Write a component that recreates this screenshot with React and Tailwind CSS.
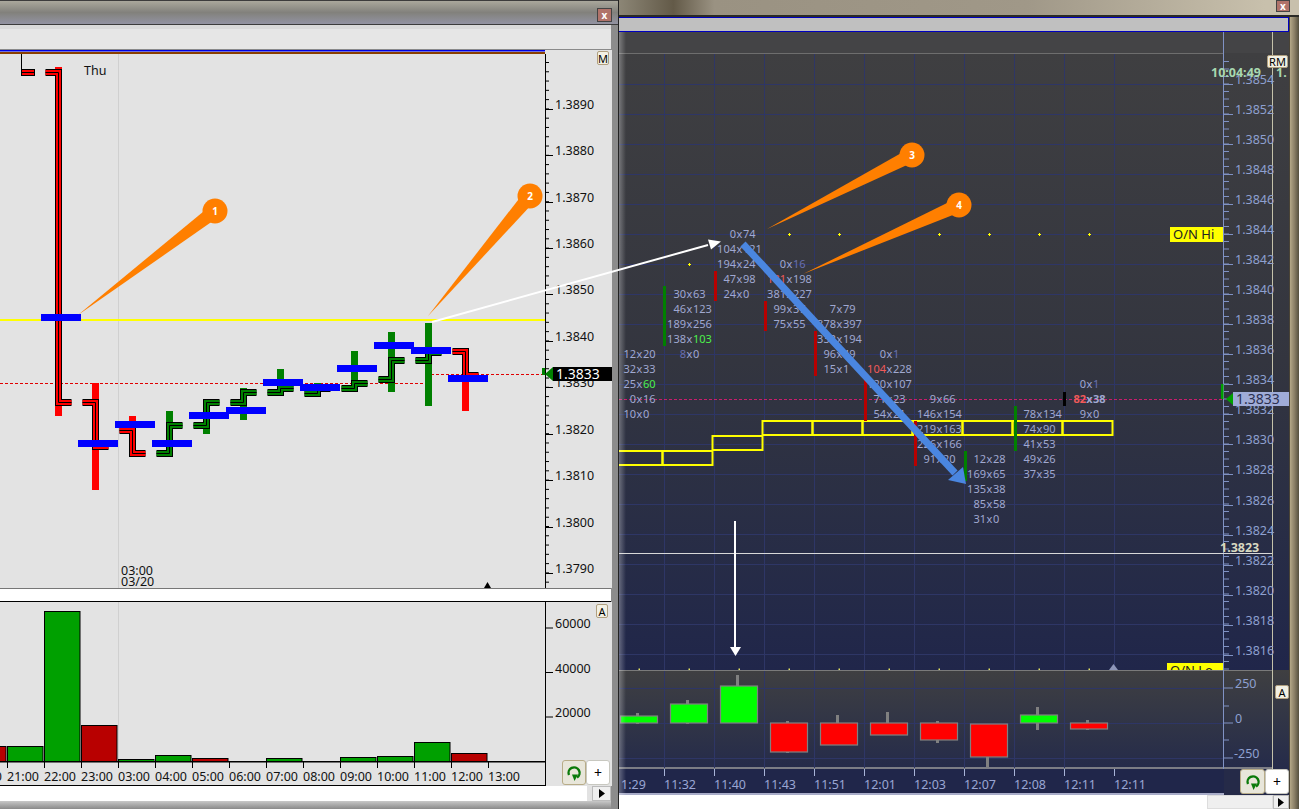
import React from "react";

const priceBars = [
  { x: 58.5, high: 67, low: 416, open: 72, close: 402, color: "#ff0000" },
  { x: 95, high: 383, low: 490, open: 402, close: 446, color: "#ff0000" },
  { x: 132, high: 416, low: 456, open: 430, close: 453, color: "#ff0000" },
  { x: 169.5, high: 411, low: 457, open: 453, close: 425, color: "#008000" },
  { x: 206, high: 402, low: 434, open: 425, close: 402, color: "#008000" },
  { x: 243.5, high: 388, low: 420, open: 402, close: 392, color: "#008000" },
  { x: 280, high: 369, low: 395, open: 392, close: 388, color: "#008000" },
  { x: 317, high: 383, low: 396, open: 393, close: 388, color: "#008000" },
  { x: 354, high: 351, low: 391, open: 388, close: 383, color: "#008000" },
  { x: 391, high: 332, low: 392, open: 379, close: 360, color: "#008000" },
  { x: 428, high: 323, low: 406, open: 360, close: 352, color: "#008000" },
  { x: 465, high: 351, low: 411, open: 351, close: 375, color: "#ff0000" },
];

const blueMarks = [
  [41, 314], [78, 440], [115, 421], [152, 440], [189, 412], [226, 407],
  [263, 379], [300, 384], [337, 365], [374, 342], [411, 347], [448, 375],
];

const leftPrices = [
  ["1.3890", 105], ["1.3880", 151], ["1.3870", 198], ["1.3860", 244], ["1.3850", 290],
  ["1.3840", 337], ["1.3830", 383], ["1.3820", 430], ["1.3810", 476], ["1.3800", 523], ["1.3790", 569],
];

const volumes = [
  { x: -30, top: 746, color: "#b80000" },
  { x: 7, top: 746, color: "#00a000" },
  { x: 44, top: 611, color: "#00a000" },
  { x: 81, top: 725, color: "#b80000" },
  { x: 118, top: 759, color: "#00a000" },
  { x: 155, top: 755, color: "#00a000" },
  { x: 192, top: 758, color: "#b80000" },
  { x: 266, top: 758, color: "#00a000" },
  { x: 340, top: 757, color: "#00a000" },
  { x: 377, top: 756, color: "#00a000" },
  { x: 414, top: 742, color: "#00a000" },
  { x: 451, top: 753, color: "#b80000" },
];

const hours = ["20:00", "21:00", "22:00", "23:00", "03:00", "04:00", "05:00", "06:00", "07:00", "08:00", "09:00", "10:00", "11:00", "12:00", "13:00"];

const rightPrices = [
  ["1.3854", 79], ["1.3852", 109], ["1.3850", 139], ["1.3848", 169], ["1.3846", 199], ["1.3844", 229],
  ["1.3842", 259], ["1.3840", 289], ["1.3838", 319], ["1.3836", 349], ["1.3834", 379], ["1.3832", 409],
  ["1.3830", 439], ["1.3828", 469], ["1.3826", 500], ["1.3824", 530], ["1.3822", 560], ["1.3820", 590],
  ["1.3818", 620], ["1.3816", 650],
];

const gridX = [664, 714, 764, 814, 864, 914, 964, 1014, 1064, 1114];

const RED = "#f05a5a";
const GREEN = "#4cf04c";
const DIM = "#6a70b0";
const TEXT = "#a0a8d0";

// bid x ask cells, column x, row y, [bid, ask, bidColor, askColor]
const footprint = [
  { x: 639, y: 354, rows: [["12", "20"], ["32", "33"], ["25", "60", null, GREEN], ["0", "16"], ["10", "0"]] },
  { x: 689, y: 294, rows: [["30", "63"], ["46", "123"], ["189", "256"], ["138", "103", null, GREEN], ["8", "0", DIM]] },
  { x: 739, y: 234, rows: [["0", "74"], ["104", "121"], ["194", "24"], ["47", "98"], ["24", "0"]] },
  { x: 789, y: 264, rows: [["0", "16", null, DIM], ["131", "198", RED], ["381", "227"], ["99", "37"], ["75", "55"]] },
  { x: 839, y: 309, rows: [["7", "79"], ["378", "397"], ["332", "194"], ["96", "49"], ["15", "1"]] },
  { x: 889, y: 354, rows: [["0", "1", null, DIM], ["104", "228", RED], ["120", "107"], ["71", "23"], ["54", "21"]] },
  { x: 939, y: 399, rows: [["9", "66"], ["146", "154"], ["219", "163"], ["226", "166"], ["91", "20"]] },
  { x: 989, y: 459, rows: [["12", "28"], ["169", "65"], ["135", "38"], ["85", "58"], ["31", "0"]] },
  { x: 1039, y: 414, rows: [["78", "134"], ["74", "90"], ["41", "53"], ["49", "26"], ["37", "35"]] },
  { x: 1089, y: 384, rows: [["0", "1", null, DIM], ["82", "38", RED], ["9", "0"]] },
];

const sideBars = [
  [663, 286, 346, "#008000"], [714, 271, 301, "#b80000"], [764, 301, 331, "#b80000"],
  [814, 331, 376, "#b80000"], [864, 376, 421, "#b80000"], [914, 421, 466, "#b80000"],
  [964, 451, 481, "#008000"], [1014, 406, 451, "#008000"], [1063, 392, 406, "#000000"],
];

const yellowBoxes = [
  [612, 451, 50], [662, 451, 50], [712, 436, 50], [762, 421, 50], [812, 421, 50], [862, 421, 50],
  [912, 421, 50], [962, 421, 50], [1012, 421, 50], [1062, 421, 50],
];

const candles = [
  { x: 620, top: 716, bottom: 723, high: 713, low: 724, up: true },
  { x: 670, top: 704, bottom: 723, high: 700, low: 724, up: true },
  { x: 720, top: 686, bottom: 723, high: 675, low: 723, up: true },
  { x: 770, top: 723, bottom: 752, high: 721, low: 753 },
  { x: 820, top: 723, bottom: 745, high: 715, low: 745 },
  { x: 870, top: 723, bottom: 735, high: 712, low: 735 },
  { x: 920, top: 723, bottom: 740, high: 721, low: 743 },
  { x: 970, top: 724, bottom: 757, high: 724, low: 767 },
  { x: 1020, top: 715, bottom: 723, high: 707, low: 730, up: true },
  { x: 1070, top: 723, bottom: 729, high: 720, low: 730 },
];

const times = ["11:32", "11:40", "11:43", "11:51", "12:01", "12:03", "12:07", "12:08", "12:11", "12:11"];

const callouts = [
  { n: 1, cx: 215, cy: 211, tx: 78, ty: 315 },
  { n: 2, cx: 530, cy: 196, tx: 428, ty: 316 },
  { n: 3, cx: 912, cy: 155, tx: 767, ty: 229 },
  { n: 4, cx: 959, cy: 205, tx: 803, ty: 274 },
];

const range = (n) => Array.from({ length: n }, (_, i) => i);

const PriceBar = ({ x, high, low, open, close, color }) => {
  const cx = Math.floor(x) + 0.5;
  const points = `${cx - 13},${open + 0.5} ${cx},${open + 0.5} ${cx},${close + 0.5} ${cx + 13},${close + 0.5}`;
  return (
    <g>
      <rect x={cx - 3.5} y={high} width="7" height={low - high} fill={color} />
      <polyline points={points} fill="none" stroke="#000" strokeWidth="7" />
      <polyline points={points} fill="none" stroke={color} strokeWidth="5" />
      <polyline points={points} fill="none" stroke="#000" strokeWidth="1" />
    </g>
  );
};

const Dot = ({ x, y }) => (
  <path d={`M${x - 1.5} ${y} h3 M${x} ${y - 1.5} v3`} stroke="#ffff00" strokeWidth="1" fill="none" />
);

const SmallButton = ({ label, className }) => (
  <div className={`absolute flex items-center justify-center rounded-[2px] border border-[#b0a080] bg-[#f2f0e4] text-[11px] leading-none text-black ${className}`}>
    {label}
  </div>
);

const RefreshIcon = () => (
  <svg width="16" height="18" viewBox="0 0 16 18">
    <path d="M3 11 A5.5 5.5 0 1 1 11 13.5" fill="none" stroke="#0a7a0a" strokeWidth="2.4" />
    <path d="M6 10.5 L12 10.5 L8.5 17 Z" fill="#0a7a0a" />
  </svg>
);

const BottomButtons = ({ refreshClass, plusClass }) => (
  <>
    <div className={`absolute flex items-center justify-center rounded-[3px] border border-[#b8ac88] bg-[#e8e6da] ${refreshClass}`}>
      <RefreshIcon />
    </div>
    <div className={`absolute flex items-center justify-center rounded-[3px] border border-[#c8c8c0] bg-white text-[14px] leading-none text-black ${plusClass}`}>
      +
    </div>
  </>
);

const LeftWindow = () => (
  <div className="relative flex h-[809px] w-[619px] shrink-0 flex-col border-r border-[#222] bg-[#8c8c8c]">
    {/* Title */}
    <div className="h-[25px] shrink-0 border-y border-[#3c3c3c] bg-linear-to-b from-[#aaa89c] via-[#82817c] to-[#9393a2]" />
    <div className="relative flex flex-1 flex-col overflow-hidden pr-[7px]">
      {/* Toolbar */}
      <div className="h-[25px] shrink-0 border-b border-[#8a8a8a] bg-[#e6e6e6]">
        <div className="h-[4px] bg-[#dadada]" />
      </div>

      {/* Price pane */}
      <svg viewBox="0 50 612 538" className="h-[538px] w-[612px] shrink-0 bg-[#e3e3e3]">
        <rect x="0" y="50" width="545" height="1.5" fill="#0000e0" />
        <rect x="0" y="52" width="545" height="2" fill="#8b4000" />
        <line x1="118.5" y1="54" x2="118.5" y2="588" stroke="#d0d0d0" />
        <line x1="545.5" y1="54" x2="545.5" y2="588" stroke="#000" />
        {range(58).map((i) => (
          <line key={i} x1="545" x2="549" y1={62.5 + i * 9.28} y2={62.5 + i * 9.28} stroke="#000" />
        ))}
        {leftPrices.map(([label, y]) => (
          <g key={label}>
            <line x1="545" x2="553" y1={y + 4.5} y2={y + 4.5} stroke="#000" />
            <text x="555" y={y + 3.5} fontSize="12.5" fill="#111">{label}</text>
          </g>
        ))}
        <text x="84" y="75" fontSize="12.5" fill="#111">Thu</text>
        <text x="121" y="575" fontSize="12.5" fill="#111">03:00</text>
        <text x="121" y="586" fontSize="12.5" fill="#111">03/20</text>
        <path d="M484 588 L487.5 582 L491 588 Z" fill="#000" />

        <line x1="21.5" y1="54" x2="21.5" y2="70" stroke="#000" />
        <polyline points="21,72.5 35,72.5" fill="none" stroke="#000" strokeWidth="7" />
        <polyline points="22,72.5 34,72.5" fill="none" stroke="#ff0000" strokeWidth="5" />
        <line x1="22" y1="72.5" x2="34" y2="72.5" stroke="#000" />

        <line x1="0" x2="545" y1="320" y2="320" stroke="#ffff00" strokeWidth="2" />
        <line x1="0" x2="431" y1="383.5" y2="383.5" stroke="#e00000" strokeDasharray="3 2" />
        <line x1="431" x2="545" y1="374.5" y2="374.5" stroke="#e00000" strokeDasharray="3 2" />
        {priceBars.map((bar) => <PriceBar key={bar.x} {...bar} />)}
        {blueMarks.map(([x, y]) => <rect key={x} x={x} y={y} width="40" height="7" fill="#0000ff" />)}

        <rect x="542" y="368" width="3" height="7" fill="#008000" />
        <path d="M545 374 L553 367 L553 381 Z" fill="#008000" />
        <rect x="553" y="367" width="59" height="14" fill="#000" />
        <text x="556" y="379" fontSize="14" fill="#fff">1.3833</text>
      </svg>

      {/* Divider */}
      <div className="h-[14px] shrink-0 border-y border-t-[#777] border-b-[#000] bg-white" />

      {/* Volume pane */}
      <svg viewBox="0 602 612 159" className="h-[159px] w-[612px] shrink-0 bg-[#e3e3e3]">
        <line x1="118.5" y1="602" x2="118.5" y2="761" stroke="#d0d0d0" />
        <line x1="545.5" y1="602" x2="545.5" y2="761" stroke="#000" />
        {[["60000", 628], ["40000", 672.5], ["20000", 717]].map(([label, y]) => (
          <g key={label}>
            <line x1="545" x2="553" y1={y} y2={y} stroke="#000" />
            <text x="555" y={y} fontSize="12.5" fill="#111">{label}</text>
          </g>
        ))}
        {volumes.map((v) => (
          <rect key={v.x} x={v.x + 0.5} y={v.top + 0.5} width="35.5" height={761 - v.top} fill={v.color} stroke="#000" />
        ))}
      </svg>

      {/* Time axis */}
      <svg viewBox="0 761 612 25" className="h-[25px] w-[612px] shrink-0 bg-[#e3e3e3]">
        <rect x="0" y="761" width="546" height="1.5" fill="#000" />
        <rect x="0" y="785" width="546" height="1" fill="#000" />
        <line x1="545.5" y1="761" x2="545.5" y2="786" stroke="#000" />
        {hours.map((label, i) => (
          <g key={i}>
            <line x1={i * 37 - 29.5} x2={i * 37 - 29.5} y1="761" y2="768" stroke="#000" />
            <text x={i * 37 - 30} y="781" fontSize="12.5" fill="#111">{label}</text>
          </g>
        ))}
      </svg>

      {/* Scrollbar */}
      <div className="flex h-[15px] w-[611px] shrink-0 bg-white">
        <div className="flex-1" />
        <div className="w-[5px] bg-[#e2e2e2]" />
        <div className="flex w-[19px] items-center justify-center border border-[#bbb] bg-[#efefef]">
          <svg width="6" height="9" viewBox="0 0 6 9"><path d="M0 0 L6 4.5 L0 9 Z" fill="#000" /></svg>
        </div>
      </div>
      <div className="flex-1 bg-linear-to-b from-[#c8c8c8] to-[#8a8a8a]" />

      <SmallButton label="M" className="right-[9px] top-[26px] h-[14px] w-[12px]" />
      <SmallButton label="A" className="right-[10px] top-[579px] h-[14px] w-[12px]" />
      <BottomButtons refreshClass="left-[562px] top-[735px] h-[25px] w-[24px]" plusClass="left-[586px] top-[735px] h-[25px] w-[24px]" />
    </div>
    <div className="absolute right-[6px] top-[8px] flex h-[14px] w-[15px] items-center justify-center border border-[#444] bg-[#b0736a] text-[10px] font-bold leading-none text-white">
      x
    </div>
  </div>
);

const RightPanel = () => (
  <div className="relative flex h-[809px] flex-1 flex-col">
    <div className="h-[17px] shrink-0 border-b-2 border-[#2a2a26] bg-[linear-gradient(90deg,#8c8676_0%,#635a48_8%,#9a9282_14%,#a09888_60%,#c8c0ac_95%)]" />
    <div className="flex flex-1">
      <div className="relative flex w-[670px] shrink-0 flex-col">
        <div className="h-[15px] shrink-0 border-y border-r border-[#0000c0] bg-[#c0c0c0]" />

        {/* Empty strip above the chart */}
        <svg viewBox="619 32 670 21" className="h-[21px] w-[670px] shrink-0 bg-[#444446]">
          <line x1="1223.5" x2="1223.5" y1="32" y2="53" stroke="#8092c4" />
          <line x1="1272.5" x2="1272.5" y1="32" y2="53" stroke="#c4c2aa" />
        </svg>

        {/* Footprint pane */}
        <svg viewBox="619 53 670 617" className="h-[617px] w-[670px] shrink-0 bg-linear-to-b from-[#3f3f41] via-[#33353f] to-[#20264a]">
          <line x1="619" x2="1223" y1="53.5" y2="53.5" stroke="#6e6e6e" />
          {gridX.map((x) => <line key={x} x1={x + 0.5} x2={x + 0.5} y1="54" y2="670" stroke="#2e3666" />)}
          {range(20).map((i) => <line key={i} x1="619" x2="1223" y1={84.5 + i * 30} y2={84.5 + i * 30} stroke="#2e3666" />)}

          {[789, 839, 939, 989, 1039, 1089].map((x) => <Dot key={x} x={x + 0.5} y={234.5} />)}
          <Dot x={689.5} y={264.5} />
          {range(10).map((i) => <rect key={i} x={638.5 + i * 50} y="668.5" width="1.5" height="1.5" fill="#e8e860" />)}

          <line x1="619" x2="1223" y1="399.5" y2="399.5" stroke="#c81e6e" strokeDasharray="3 2" />
          {yellowBoxes.map(([x, y, w]) => (
            <rect key={x} x={x + 0.5} y={y} width={w} height="14" fill="none" stroke="#ffff00" strokeWidth="2" />
          ))}
          {sideBars.map(([x, top, bottom, color]) => <rect key={x} x={x} y={top} width="3" height={bottom - top} fill={color} />)}

          {footprint.map((col) =>
            col.rows.map(([bid, ask, bidColor, askColor], i) => {
              const y = col.y + i * 15 + 4;
              const bold = bid === "82";
              return (
                <g key={`${col.x}-${i}`} fontSize="11" fill={TEXT} fontWeight={bold ? 700 : 400}>
                  <text x={col.x - 3} y={y} textAnchor="end" fill={bidColor || TEXT}>{bid}</text>
                  <text x={col.x + 0.5} y={y} textAnchor="middle">x</text>
                  <text x={col.x + 4} y={y} fill={askColor || TEXT}>{ask}</text>
                </g>
              );
            })
          )}

          <line x1="1223.5" x2="1223.5" y1="53" y2="670" stroke="#8092c4" />
          <line x1="1272.5" x2="1272.5" y1="53" y2="670" stroke="#c4c2aa" />
          {range(82).map((i) => <line key={i} x1="1223" x2="1229" y1={61.5 + i * 7.5} y2={61.5 + i * 7.5} stroke="#8092c4" />)}
          {rightPrices.map(([label, y]) => (
            <g key={label}>
              <line x1="1223" x2="1233" y1={y + 5.5} y2={y + 5.5} stroke="#8092c4" />
              <text x="1235" y={y + 5} fontSize="12.5" fill="#8ea0d0">{label}</text>
            </g>
          ))}

          <line x1="619" x2="1272" y1="553.5" y2="553.5" stroke="#d8d8d8" />
          <text x="1220" y="552" fontSize="12.5" fontWeight="700" fill="#d8d8c0">1.3823</text>
          <text x="1211" y="77" fontSize="12.5" fontWeight="700" fill="#a8d8b0">10:04:49</text>
          <text x="1276" y="77" fontSize="12.5" fontWeight="700" fill="#a8d8b0">1.</text>

          <rect x="1221" y="384" width="2.5" height="15" fill="#00a000" />
          <path d="M1226 399 L1233 393 L1233 405 Z" fill="#00a000" />
          <rect x="1233" y="392" width="57" height="14" fill="#a0acd8" />
          <text x="1236" y="404" fontSize="14" fill="#2c3050">1.3833</text>

          <rect x="1170" y="227" width="53" height="15" fill="#ffff00" />
          <text x="1173" y="239" fontSize="13" fill="#222">O/N Hi</text>
          <rect x="1167" y="663" width="56" height="7" fill="#ffff00" />
          <text x="1170" y="675" fontSize="13" fill="#222">O/N Lo</text>
          <path d="M1109 670 L1113.5 664 L1118 670 Z" fill="#8e96b8" />
        </svg>

        {/* Delta pane */}
        <svg viewBox="619 670 670 99" className="h-[99px] w-[670px] shrink-0 bg-linear-to-b from-[#3f3f41] to-[#252b4a]">
          <line x1="619" x2="1272" y1="670.5" y2="670.5" stroke="#7a7a7a" />
          <line x1="619" x2="1272" y1="768" y2="768" stroke="#9a9a9a" strokeWidth="1.5" />
          {gridX.slice(0, 9).map((x) => <line key={x} x1={x + 0.5} x2={x + 0.5} y1="671" y2="768" stroke="#2e3666" />)}
          {[688.5, 723.5, 758.5].map((y) => <line key={y} x1="619" x2="1223" y1={y} y2={y} stroke="#2e3666" />)}
          {candles.map((c) => (
            <g key={c.x}>
              <rect x={c.x + 16} y={c.high} width="3" height={c.low - c.high} fill="#808080" />
              <rect x={c.x + 0.5} y={c.top} width="37" height={c.bottom - c.top} fill={c.up ? "#00ff00" : "#ff0000"} stroke="#808080" strokeWidth="1.2" />
            </g>
          ))}
          <line x1="1223.5" x2="1223.5" y1="670" y2="769" stroke="#8092c4" />
          <line x1="1272.5" x2="1272.5" y1="670" y2="769" stroke="#c4c2aa" />
          {[706, 740].map((y) => <line key={y} x1="1223" x2="1229" y1={y} y2={y} stroke="#8092c4" />)}
          {[["250", 688], ["0", 723], ["-250", 758]].map(([label, y]) => (
            <g key={label}>
              <line x1="1223" x2="1233" y1={y} y2={y} stroke="#8092c4" />
              <text x={label === "-250" ? 1234 : 1235} y={y} fontSize="12.5" fill="#8ea0d0">{label}</text>
            </g>
          ))}
        </svg>

        {/* Time axis */}
        <svg viewBox="619 769 670 26" className="h-[26px] w-[670px] shrink-0">
          <rect x="619" y="769" width="605" height="24" fill="#20264a" />
          <rect x="1224" y="769" width="65" height="26" fill="#252a48" />
          <rect x="619" y="793" width="605" height="2" fill="#a8acc8" />
          {gridX.map((x) => <line key={x} x1={x + 0.5} x2={x + 0.5} y1="769" y2="776" stroke="#a8b4d8" />)}
          <text x="621" y="789" fontSize="12.5" fill="#9aa6d4">1:29</text>
          {times.map((t, i) => <text key={i} x={gridX[i]} y="789" fontSize="12.5" fill="#9aa6d4">{t}</text>)}
        </svg>

        {/* Scrollbar */}
        <div className="flex h-[14px] shrink-0 bg-white">
          <div className="flex-1" />
          <div className="w-[66px] border border-[#ddd] bg-[#efefef]" />
          <div className="flex w-[16px] items-center justify-center border border-[#bbb] bg-[#efefef]">
            <svg width="6" height="9" viewBox="0 0 6 9"><path d="M0 0 L6 4.5 L0 9 Z" fill="#000" /></svg>
          </div>
        </div>

        {/* Soft shadow thrown by the left window */}
        <div className="absolute bottom-[14px] left-0 top-[15px] w-[7px] bg-linear-to-r from-white/30 to-transparent" />

        <SmallButton label="RM" className="left-[648px] top-[38px] h-[13px] w-[21px]" />
        <SmallButton label="A" className="left-[656px] top-[668px] h-[14px] w-[14px]" />
        <BottomButtons refreshClass="left-[621px] top-[752px] h-[25px] w-[25px]" plusClass="left-[646px] top-[752px] h-[25px] w-[24px]" />
      </div>
      <div className="flex-1 border-l border-[#4a4436] bg-linear-to-r from-[#b4a888] via-[#8a7f66] to-[#55503f]" />
    </div>
    <div className="absolute right-[9px] top-0 flex h-[12px] w-[14px] items-center justify-center border border-[#444] bg-[#b0736a] text-[10px] font-bold leading-none text-white">
      x
    </div>
  </div>
);

// Arrows and numbered callouts drawn over both charts
const Annotations = () => (
  <svg viewBox="0 0 1299 809" className="pointer-events-none absolute inset-0 h-[809px] w-[1299px]">
    <line x1="432" y1="322" x2="708" y2="245" stroke="#fff" strokeWidth="2" />
    <path d="M721 241.5 L708 239.5 L711 249.5 Z" fill="#fff" />
    <line x1="735" y1="521" x2="735" y2="648" stroke="#fff" strokeWidth="2" />
    <path d="M730 647 L741 647 L735.5 656 Z" fill="#fff" />

    <line x1="743" y1="244" x2="955" y2="473" stroke="#4a86e0" strokeWidth="7" />
    <path d="M966 484 L948 480 L963 467 Z" fill="#4a86e0" />

    {callouts.map(({ n, cx, cy, tx, ty }) => {
      const dx = cx - tx;
      const dy = cy - ty;
      const len = Math.hypot(dx, dy);
      const px = (-dy / len) * 7;
      const py = (dx / len) * 7;
      return (
        <g key={n}>
          <path d={`M${tx} ${ty} L${cx + px} ${cy + py} L${cx - px} ${cy - py} Z`} fill="#ff7f00" />
          <circle cx={cx} cy={cy} r="12.5" fill="#ff7f00" />
          <text x={cx} y={cy + 3.5} textAnchor="middle" fontSize="10" fontWeight="700" fill="#fff">{n}</text>
        </g>
      );
    })}
  </svg>
);

const App = () => {
  return (
    <div className="relative flex h-[809px] w-[1299px] overflow-hidden bg-[#222] [font-family:'Noto_Sans',sans-serif]">
      <LeftWindow />
      <RightPanel />
      <Annotations />
    </div>
  );
};

export default App;
